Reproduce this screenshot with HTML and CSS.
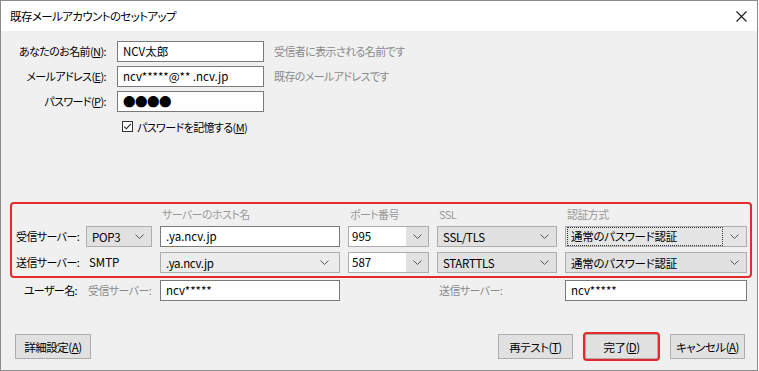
FILE: index.html
```html
<!DOCTYPE html>
<html lang="ja">
<head>
    <meta charset="UTF-8">
    <meta name="viewport" content="width=device-width, initial-scale=1.0">
    <title>既存メールアカウントのセットアップ</title>
    <link rel="stylesheet" href="styles.css">
</head>
<body>

<div class="window">
    <div class="titlebar">
        <span class="title">既存メールアカウントのセットアップ</span>
        <span class="close">
            <svg width="11" height="11" viewBox="0 0 11 11"><path d="M0.5 0.5 L10.5 10.5 M10.5 0.5 L0.5 10.5" stroke="#1a1a1a" stroke-width="1.1" fill="none"/></svg>
        </span>
    </div>

    <div class="content">
        <div class="identity">
            <label class="field-label">あなたのお名前(<u>N</u>):</label>
            <div class="textbox">NCV太郎</div>
            <span class="hint">受信者に表示される名前です</span>

            <label class="field-label">メールアドレス(<u>E</u>):</label>
            <div class="textbox">ncv*****@** .ncv.jp</div>
            <span class="hint">既存のメールアドレスです</span>

            <label class="field-label">パスワード(<u>P</u>):</label>
            <div class="textbox dots">●●●●</div>
            <span></span>

            <div class="remember">
                <svg class="checkbox" width="11" height="11" viewBox="0 0 11 11">
                    <rect x="0.5" y="0.5" width="10" height="10" fill="#fff" stroke="#333" stroke-width="1"/>
                    <path d="M2.2 5.6 L4.4 7.8 L8.8 2.8" stroke="#222" stroke-width="1.1" fill="none"/>
                </svg>
                <span>パスワードを記憶する(<u>M</u>)</span>
            </div>
        </div>

        <div class="servers">
            <span></span>
            <span></span>
            <span class="col-head">サーバーのホスト名</span>
            <span class="col-head">ポート番号</span>
            <span class="col-head">SSL</span>
            <span class="col-head">認証方式</span>

            <span class="row-label">受信サーバー:</span>
            <div class="select">POP3 <svg class="chev" width="9" height="5" viewBox="0 0 9 5"><path d="M0.5 0.5 L4.5 4.5 L8.5 0.5" stroke="#555" fill="none"/></svg></div>
            <div class="textbox">.ya.ncv.jp</div>
            <div class="combo"><span class="value">995</span><span class="drop"><svg class="chev" width="9" height="5" viewBox="0 0 9 5"><path d="M0.5 0.5 L4.5 4.5 L8.5 0.5" stroke="#555" fill="none"/></svg></span></div>
            <div class="select">SSL/TLS <svg class="chev" width="9" height="5" viewBox="0 0 9 5"><path d="M0.5 0.5 L4.5 4.5 L8.5 0.5" stroke="#555" fill="none"/></svg></div>
            <div class="select focused"><span class="focus-rect">通常のパスワード認証</span><svg class="chev" width="9" height="5" viewBox="0 0 9 5"><path d="M0.5 0.5 L4.5 4.5 L8.5 0.5" stroke="#555" fill="none"/></svg></div>

            <span class="row-label">送信サーバー:</span>
            <span class="plain">SMTP</span>
            <div class="select host">.ya.ncv.jp <svg class="chev" width="9" height="5" viewBox="0 0 9 5"><path d="M0.5 0.5 L4.5 4.5 L8.5 0.5" stroke="#555" fill="none"/></svg></div>
            <div class="combo"><span class="value">587</span><span class="drop"><svg class="chev" width="9" height="5" viewBox="0 0 9 5"><path d="M0.5 0.5 L4.5 4.5 L8.5 0.5" stroke="#555" fill="none"/></svg></span></div>
            <div class="select">STARTTLS <svg class="chev" width="9" height="5" viewBox="0 0 9 5"><path d="M0.5 0.5 L4.5 4.5 L8.5 0.5" stroke="#555" fill="none"/></svg></div>
            <div class="select">通常のパスワード認証 <svg class="chev" width="9" height="5" viewBox="0 0 9 5"><path d="M0.5 0.5 L4.5 4.5 L8.5 0.5" stroke="#555" fill="none"/></svg></div>
        </div>

        <div class="user-row">
            <span class="row-label right">ユーザー名:</span>
            <span class="sub-label">受信サーバー:</span>
            <div class="textbox">ncv*****</div>
            <span></span>
            <span class="sub-label">送信サーバー:</span>
            <div class="textbox">ncv*****</div>
        </div>

        <div class="actions">
            <button class="btn">詳細設定(<u>A</u>)</button>
            <span class="spacer"></span>
            <button class="btn">再テスト(<u>T</u>)</button>
            <button class="btn default">完了(<u>D</u>)</button>
            <button class="btn">キャンセル(<u>A</u>)</button>
        </div>
    </div>
</div>

</body>
</html>
```

FILE: styles.css
```css
body {
    margin: 0;
    width: 759px;
    height: 371px;
    background: #ffffff;
    font-family: "Noto Sans CJK JP", "Noto Sans", sans-serif;
    font-size: 11px;
    letter-spacing: -0.6px;
    font-feature-settings: "palt";
    color: #000;
}

u {
    text-decoration: underline;
    text-underline-offset: 1px;
}

.window {
    box-sizing: border-box;
    width: 758px;
    height: 371px;
    border: 1px solid #8c8c8c;
    background: #f0f0f0;
    display: flex;
    flex-direction: column;
}

.titlebar {
    height: 30px;
    background: #fff;
    display: flex;
    align-items: center;
    justify-content: space-between;
    padding: 0 10px 0 9px;
    font-size: 11.5px;
}

.close {
    display: flex;
}

.content {
    padding-top: 10px;
}

/* name / address / password */
.identity {
    display: grid;
    grid-template-columns: 107px 147px 1fr;
    grid-auto-rows: 21px;
    column-gap: 9px;
    row-gap: 4px;
}

.field-label {
    text-align: right;
    padding-right: 2px;
    line-height: 21px;
}

.textbox {
    box-sizing: border-box;
    height: 21px;
    background: #fff;
    border: 1px solid #7a7a7a;
    padding: 0 5px;
    line-height: 19px;
    white-space: nowrap;
    font-size: 11.5px;
    letter-spacing: 0;
}

.textbox.dots {
    font-size: 12.5px;
    letter-spacing: -0.5px;
}

.hint {
    line-height: 21px;
    color: #8a8a8a;
    padding-left: 1px;
}

.remember {
    grid-column: 2 / 4;
    display: flex;
    align-items: center;
    gap: 4px;
    padding-left: 5px;
}

/* server settings box */
.servers {
    margin: 65px 0 0 9px;
    width: 742px;
    box-sizing: border-box;
    border: 2px solid #e32b2b;
    border-radius: 4px;
    padding: 0 0 3px 4px;
    display: grid;
    grid-template-columns: 62px 66px 180px 81px 120px 182px;
    grid-template-rows: 22px 26px 21px;
    column-gap: 8px;
}

.servers > * {
    align-self: start;
}

.col-head {
    color: #999;
    line-height: 20px;
    padding-left: 2px;
}

.row-label {
    line-height: 21px;
    white-space: nowrap;
}

.plain {
    line-height: 21px;
    padding-left: 3px;
    font-size: 11.5px;
    letter-spacing: 0;
}

.select {
    box-sizing: border-box;
    height: 21px;
    background: #e1e1e1;
    border: 1px solid #adadad;
    display: flex;
    align-items: center;
    justify-content: space-between;
    padding: 0 7px 0 5px;
    white-space: nowrap;
    font-size: 11.5px;
    letter-spacing: -0.3px;
}

.select.host {
    background: #ececec;
    padding-right: 10px;
}

.select.focused {
    padding-left: 2px;
    background: #e5e5e5;
}

.focus-rect {
    flex: 1;
    outline: 1px dotted #333;
    height: 17px;
    line-height: 17px;
    padding-left: 3px;
    margin-right: 8px;
}

.combo {
    box-sizing: border-box;
    height: 21px;
    border: 1px solid #adadad;
    display: flex;
    font-size: 11.5px;
    letter-spacing: 0;
}

.combo .value {
    flex: 1;
    background: #fff;
    padding-left: 3px;
    line-height: 19px;
}

.combo .drop {
    width: 22px;
    background: #e1e1e1;
    display: flex;
    align-items: center;
    justify-content: center;
}

/* user name row */
.user-row {
    margin: 2px 0 0 15px;
    display: grid;
    grid-template-columns: 62px 66px 180px 81px 120px 182px;
    grid-auto-rows: 21px;
    column-gap: 8px;
}

.row-label.right {
    text-align: right;
    padding-right: 1px;
}

.sub-label {
    color: #8a8a8a;
    line-height: 21px;
    padding-left: 2px;
    white-space: nowrap;
}

/* buttons */
.actions {
    margin-top: 31px;
    height: 29px;
    display: flex;
    align-items: center;
    padding: 0 12px 0 14px;
}

.spacer {
    flex: 1;
}

.btn {
    box-sizing: border-box;
    width: 75px;
    height: 25px;
    background: #e1e1e1;
    border: 1px solid #adadad;
    border-radius: 0;
    font-family: inherit;
    font-size: 11.5px;
    letter-spacing: -0.5px;
    font-feature-settings: "palt";
    color: #000;
    padding: 0;
    margin-left: 10px;
}

.btn:first-child {
    margin-left: 0;
    width: 76px;
}

.btn.default {
    width: 77px;
    height: 29px;
    border: 2px solid #e32b2b;
    border-radius: 4px;
    box-shadow: inset 0 0 0 1px #adadad;
}
```
